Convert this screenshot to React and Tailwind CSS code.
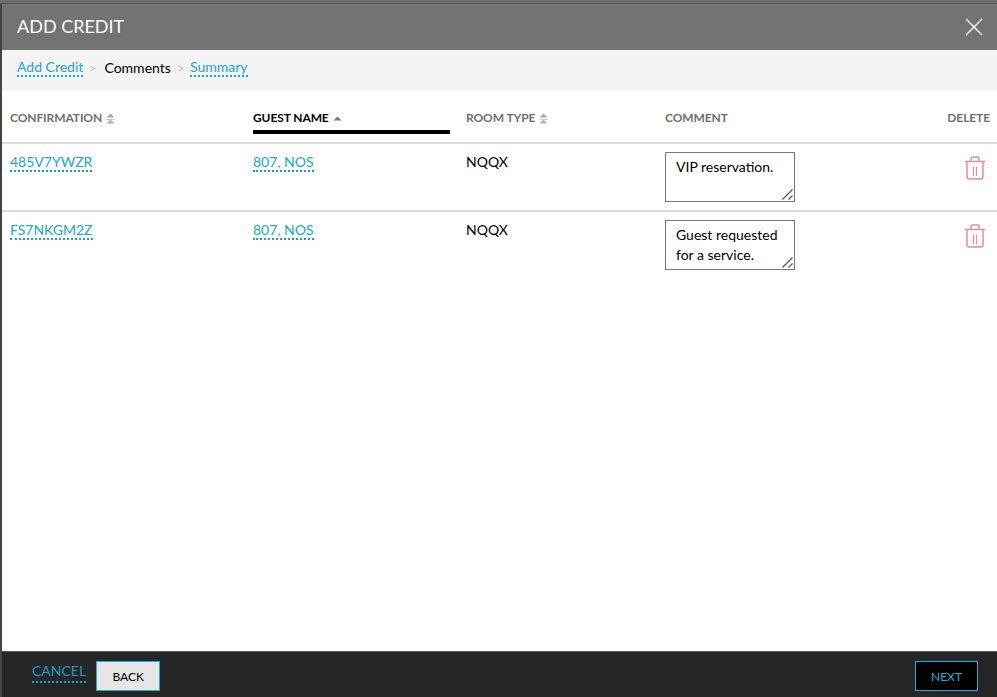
const SortBoth = () => (
  <svg width="9" height="11" viewBox="0 0 9 11" className="ml-[4px] mt-[3px]">
    <path d="M4.5 0.5 L8.5 4.5 H0.5 Z" fill="#a8a8a8" />
    <rect x="0.5" y="6" width="8" height="1" fill="#c4c4c4" />
    <path d="M4.5 6.5 L8.5 10.5 H0.5 Z" fill="#b4b4b4" />
  </svg>
);

const SortUp = () => (
  <svg width="9" height="5" viewBox="0 0 9 5" className="ml-[4px] mt-[6px]">
    <path d="M4.5 0.5 L8.5 4.5 H0.5 Z" fill="#777777" />
  </svg>
);

const Trash = () => (
  <svg width="22" height="24" viewBox="0 0 22 24" fill="none" stroke="#e09292" strokeWidth="1.5">
    <path d="M1 5.5 H21" />
    <path d="M7 5.5 V3 a2 2 0 0 1 2 -2 h4 a2 2 0 0 1 2 2 V5.5" />
    <path d="M3 5.5 V20.5 a2.5 2.5 0 0 0 2.5 2.5 h11 a2.5 2.5 0 0 0 2.5 -2.5 V5.5" />
    <path d="M9.5 10.5 V20 M12.5 10.5 V20" strokeWidth="1.2" />
  </svg>
);

const A = ({ children, className = "" }) => (
  <a className={`block w-fit text-[#1ba7d0] border-b-2 border-dotted border-[#0fa5cf] leading-[17px] ${className}`}>{children}</a>
);

const Row = ({ conf, comment, last }) => (
  <div className={`grid grid-cols-[243px_213px_199px_1fr_67px] h-[68px] pl-[8px] pr-[5px] pt-[8px] text-[14px] text-black ${last ? "" : "border-b-2 border-[#dddddd]"}`}>
    <div className="pt-[1px]"><A>{conf}</A></div>
    <div className="pt-[1px]"><A>807, NOS</A></div>
    <div className="leading-[20px]">NQQX</div>
    <div className="relative">
      <textarea
        readOnly
        defaultValue={comment}
        className="block w-[130px] h-[50px] resize-none border border-[#777777] bg-white px-[10px] pt-[4px] text-[14px] leading-[20px] text-black outline-none"
      />
      <svg width="11" height="11" viewBox="0 0 11 11" fill="none" stroke="#555555" strokeWidth="1.2" className="absolute left-[117px] top-[37px]">
        <path d="M0.5 10.5 L10.5 0.5 M6.5 10.5 L10.5 6.5" />
      </svg>
    </div>
    <div className="flex justify-end pt-[4px] pr-[6px]"><Trash /></div>
  </div>
);

export default function App() {
  return (
    <div className="w-[997px] h-[697px] overflow-hidden bg-[#6e6e6e] pt-[3px] font-['Lato',sans-serif]">
      <div className="h-[1px] bg-[#555555]" />
      <div className="h-[693px] flex flex-col border-l-2 border-[#444444]">
        <div className="h-[46px] bg-[#737373] flex items-center justify-between pl-[15px] pr-[14px] shrink-0">
          <h1 className="text-[18px] text-white leading-none -mt-[2px]">ADD CREDIT</h1>
          <svg width="18" height="18" viewBox="0 0 18 18" stroke="#ffffff" strokeWidth="1.3" fill="none">
            <path d="M1 1 L17 17 M17 1 L1 17" />
          </svg>
        </div>
        <div className="h-[41px] bg-[#f4f4f4] flex items-center pl-[15px] pb-[6px] text-[14px] shrink-0">
          <A>Add Credit</A>
          <span className="ml-[5px] mr-[8px] text-[#c4c4c4]">&gt;</span>
          <span className="text-black">Comments</span>
          <span className="ml-[6px] mr-[5px] text-[#c4c4c4]">&gt;</span>
          <A>Summary</A>
        </div>
        <div className="flex-1 bg-white min-h-0">
          <div className="grid grid-cols-[243px_213px_199px_1fr_67px] h-[53px] pl-[8px] pr-[7px] text-[12px] font-bold tracking-[-0.1px] text-[#6f6f6f] border-b-2 border-[#dddddd]">
            <div className="flex items-start pt-[19px] leading-[15px]">CONFIRMATION<SortBoth /></div>
            <div className="pt-[19px] pr-[16px]">
              <div className="flex items-start text-black leading-[15px] h-[24px] border-b-4 border-black">
                GUEST NAME<SortUp />
              </div>
            </div>
            <div className="flex items-start pt-[19px] leading-[15px]">ROOM TYPE<SortBoth /></div>
            <div className="pt-[19px] leading-[15px]">COMMENT</div>
            <div className="pt-[19px] leading-[15px] text-right">DELETE</div>
          </div>
          <Row conf="485V7YWZR" comment="VIP reservation." />
          <Row conf="FS7NKGM2Z" comment={"Guest requested for a service."} last />
        </div>
        <div className="h-[46px] bg-[#262626] border-t border-[#555555] flex items-start justify-between pl-[30px] pr-[19px] pt-[9px] shrink-0">
          <div className="flex items-start">
            <A className="text-[14px] !leading-[20px] !text-[#1a9ac4] mr-[10px]">CANCEL</A>
            <button className="w-[64px] h-[30px] bg-[#e6e6e6] border border-[#17b2dc] text-[12px] text-black pt-[1px]">BACK</button>
          </div>
          <button className="w-[63px] h-[30px] bg-black border border-[#17b2dc] text-[12px] text-[#17b2dc] pt-[1px]">NEXT</button>
        </div>
      </div>
    </div>
  );
}
